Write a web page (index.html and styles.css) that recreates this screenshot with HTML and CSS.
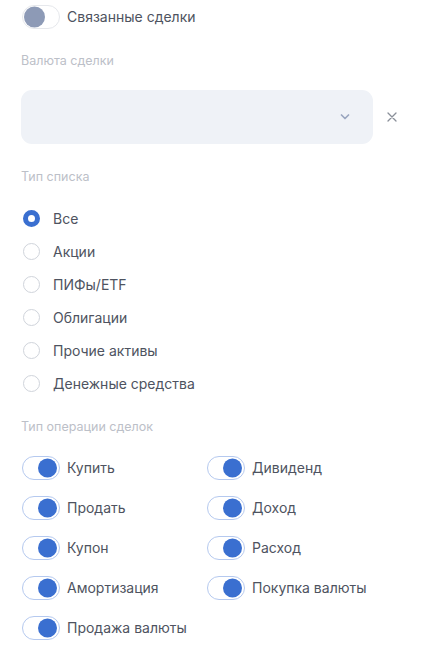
FILE: index.html
```html
<!DOCTYPE html>
<html lang="ru">
<head>
<meta charset="utf-8">
<link rel="stylesheet" href="styles.css">
</head>
<body>
<div class="panel">
  <label class="switch-row top-row">
    <span class="switch off"><span class="knob"></span></span>
    <span class="text">Связанные сделки</span>
  </label>

  <div class="field-label label-currency">Валюта сделки</div>
  <div class="select-row">
    <div class="select">
      <svg class="chevron" width="10" height="6" viewBox="0 0 10 6"><path d="M1.5 1l3.5 3.5 3.5-3.5" fill="none" stroke="#9aa6bf" stroke-width="1.7" stroke-linecap="round" stroke-linejoin="round"/></svg>
    </div>
    <svg class="clear" width="10" height="10" viewBox="0 0 10 10"><path d="M1 1l8 8M9 1l-8 8" stroke="#8a8f99" stroke-width="1.3" stroke-linecap="round"/></svg>
  </div>

  <div class="field-label label-list">Тип списка</div>
  <div class="radios">
    <div class="radio-row"><span class="radio checked"></span><span class="text">Все</span></div>
    <div class="radio-row"><span class="radio"></span><span class="text">Акции</span></div>
    <div class="radio-row"><span class="radio"></span><span class="text">ПИФы/ETF</span></div>
    <div class="radio-row"><span class="radio"></span><span class="text">Облигации</span></div>
    <div class="radio-row"><span class="radio"></span><span class="text">Прочие активы</span></div>
    <div class="radio-row"><span class="radio"></span><span class="text">Денежные средства</span></div>
  </div>

  <div class="field-label label-ops">Тип операции сделок</div>
  <div class="ops">
    <div class="switch-row"><span class="switch on"><span class="knob"></span></span><span class="text">Купить</span></div>
    <div class="switch-row"><span class="switch on"><span class="knob"></span></span><span class="text">Дивиденд</span></div>
    <div class="switch-row"><span class="switch on"><span class="knob"></span></span><span class="text">Продать</span></div>
    <div class="switch-row"><span class="switch on"><span class="knob"></span></span><span class="text">Доход</span></div>
    <div class="switch-row"><span class="switch on"><span class="knob"></span></span><span class="text">Купон</span></div>
    <div class="switch-row"><span class="switch on"><span class="knob"></span></span><span class="text">Расход</span></div>
    <div class="switch-row"><span class="switch on"><span class="knob"></span></span><span class="text">Амортизация</span></div>
    <div class="switch-row"><span class="switch on"><span class="knob"></span></span><span class="text">Покупка валюты</span></div>
    <div class="switch-row"><span class="switch on"><span class="knob"></span></span><span class="text">Продажа валюты</span></div>
  </div>
</div>
</body>
</html>
```

FILE: styles.css
```css
* { box-sizing: border-box; }
html, body { margin: 0; padding: 0; background: #ffffff; }
body {
  font-family: Inter, "Noto Sans", sans-serif;
  color: #4e5360;
  font-size: 14px;
}
.panel {
  padding: 4px 0 0 22px;
  width: 424px;
}
.switch-row {
  display: flex;
  align-items: center;
  height: 25px;
  gap: 7px;
}
.switch {
  position: relative;
  width: 38px;
  height: 24px;
  border-radius: 12px;
  background: #fff;
  flex: none;
}
.switch.off { border: 1px solid #e6e8ec; }
.switch.on { border: 1.5px solid #b5c9ef; }
.knob {
  position: absolute;
  top: 50%;
  transform: translateY(-50%);
  border-radius: 50%;
}
.switch.off .knob {
  left: 1px;
  width: 21px;
  height: 21px;
  background: #8d9ab6;
}
.switch.on .knob {
  right: 2px;
  width: 19px;
  height: 19px;
  background: #3a6fd0;
}
.text { line-height: 18px; white-space: nowrap; }

.field-label {
  font-size: 12.5px;
  line-height: 16px;
  color: #bcc0c8;
  margin-left: -1px;
}
.label-currency { margin-top: 24px; }
.select-row {
  display: flex;
  align-items: center;
  margin-top: 21px;
  margin-left: -1px;
}
.select {
  width: 352px;
  height: 54px;
  border-radius: 11px;
  background: #eff2f7;
  display: flex;
  align-items: center;
  justify-content: flex-end;
  padding-right: 23px;
}
.chevron { display: block; }
.clear { margin-left: 14px; display: block; }

.label-list { margin-top: 25px; }
.radios { margin-top: 17px; }
.radio-row {
  display: flex;
  align-items: center;
  height: 33px;
  gap: 13px;
  padding-left: 1px;
}
.radio {
  width: 17px;
  height: 17px;
  border-radius: 50%;
  border: 1.6px solid #d0d4db;
  flex: none;
}
.radio.checked {
  border: 5px solid #3a6fd0;
}

.label-ops { margin-top: 19px; }
.ops {
  margin-top: 13px;
  display: grid;
  grid-template-columns: 185px 185px;
  grid-auto-rows: 40px;
}
.ops .switch-row { height: 40px; }
```
